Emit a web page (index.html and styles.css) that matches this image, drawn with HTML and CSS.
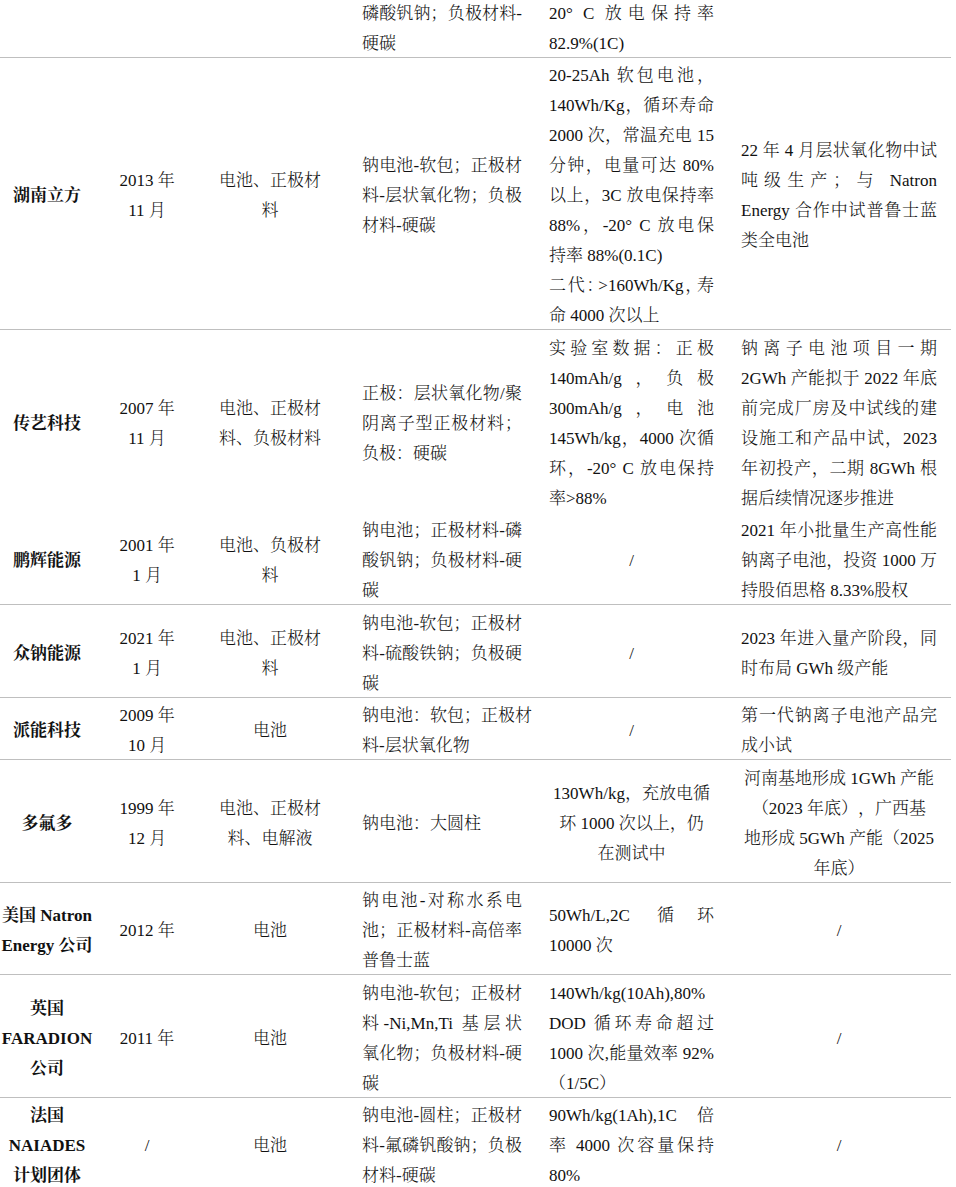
FILE: index.html
```html
<!DOCTYPE html>
<html lang="zh-CN">
<head>
<meta charset="utf-8">
<title>钠离子电池企业布局</title>
<link rel="stylesheet" href="styles.css">
</head>
<body>
<table class="tbl">
  <colgroup>
    <col class="w1"><col class="w2"><col class="w3"><col class="w4"><col class="w5"><col class="w6">
  </colgroup>
  <tbody>
    <tr>
      <td class="name"></td>
      <td class="c"></td>
      <td class="c"></td>
      <td class="mat"><div class="cv"><span class="ln j">磷酸钒钠；负极材料-</span><span class="ln">硬碳</span></div></td>
      <td class="perf"><div class="cv"><span class="ln j">20° C 放电保持率</span><span class="ln">82.9%(1C)</span></div></td>
      <td class="prog"></td>
    </tr>
    <tr>
      <td class="name"><div class="cv">湖南立方</div></td>
      <td class="c"><div class="cv">2013 年<br>11 月</div></td>
      <td class="c"><div class="cv">电池、正极材<br>料</div></td>
      <td class="mat"><div class="cv"><span class="ln j">钠电池-软包；正极材</span><span class="ln j">料-层状氧化物；负极</span><span class="ln">材料-硬碳</span></div></td>
      <td class="perf"><div class="cv"><span class="ln j">20-25Ah 软包电池，</span><span class="ln j">140Wh/Kg，循环寿命</span><span class="ln j">2000 次，常温充电 15</span><span class="ln j">分钟，电量可达 80%</span><span class="ln j">以上，3C 放电保持率</span><span class="ln j">88%，-20° C 放电保</span><span class="ln">持率 88%(0.1C)</span><span class="ln j">二代<span class="tight">：</span>&gt;160Wh/Kg<span class="tight">，</span>寿</span><span class="ln">命 4000 次以上</span></div></td>
      <td class="prog"><div class="cv"><span class="ln j">22 年 4 月层状氧化物中试</span><span class="ln j">吨级生产；与 Natron</span><span class="ln j">Energy 合作中试普鲁士蓝</span><span class="ln">类全电池</span></div></td>
    </tr>
    <tr class="nosep">
      <td class="name"><div class="cv">传艺科技</div></td>
      <td class="c"><div class="cv">2007 年<br>11 月</div></td>
      <td class="c"><div class="cv">电池、正极材<br>料、负极材料</div></td>
      <td class="mat"><div class="cv"><span class="ln j">正极：层状氧化物/聚</span><span class="ln j">阴离子型正极材料；</span><span class="ln">负极：硬碳</span></div></td>
      <td class="perf"><div class="cv"><span class="ln j">实验室数据：正极</span><span class="ln j">140mAh/g，负极</span><span class="ln j">300mAh/g，电池</span><span class="ln j">145Wh/kg，4000 次循</span><span class="ln j">环，-20° C 放电保持</span><span class="ln">率&gt;88%</span></div></td>
      <td class="prog"><div class="cv"><span class="ln j">钠离子电池项目一期</span><span class="ln j">2GWh 产能拟于 2022 年底</span><span class="ln j">前完成厂房及中试线的建</span><span class="ln j">设施工和产品中试，2023</span><span class="ln j">年初投产，二期 8GWh 根</span><span class="ln">据后续情况逐步推进</span></div></td>
    </tr>
    <tr>
      <td class="name"><div class="cv">鹏辉能源</div></td>
      <td class="c"><div class="cv">2001 年<br>1 月</div></td>
      <td class="c"><div class="cv">电池、负极材<br>料</div></td>
      <td class="mat"><div class="cv"><span class="ln j">钠电池；正极材料-磷</span><span class="ln j">酸钒钠；负极材料-硬</span><span class="ln">碳</span></div></td>
      <td class="perf mid"><div class="cv">/</div></td>
      <td class="prog"><div class="cv"><span class="ln j">2021 年小批量生产高性能</span><span class="ln j">钠离子电池，投资 1000 万</span><span class="ln">持股佰思格 8.33%股权</span></div></td>
    </tr>
    <tr>
      <td class="name"><div class="cv">众钠能源</div></td>
      <td class="c"><div class="cv">2021 年<br>1 月</div></td>
      <td class="c"><div class="cv">电池、正极材<br>料</div></td>
      <td class="mat"><div class="cv"><span class="ln j">钠电池-软包；正极材</span><span class="ln j">料-硫酸铁钠；负极硬</span><span class="ln">碳</span></div></td>
      <td class="perf mid"><div class="cv">/</div></td>
      <td class="prog"><div class="cv"><span class="ln j">2023 年进入量产阶段，同</span><span class="ln">时布局 GWh 级产能</span></div></td>
    </tr>
    <tr>
      <td class="name"><div class="cv">派能科技</div></td>
      <td class="c"><div class="cv">2009 年<br>10 月</div></td>
      <td class="c"><div class="cv">电池</div></td>
      <td class="mat"><div class="cv"><span class="ln j">钠电池：软包；正极材</span><span class="ln">料-层状氧化物</span></div></td>
      <td class="perf mid"><div class="cv">/</div></td>
      <td class="prog"><div class="cv"><span class="ln j">第一代钠离子电池产品完</span><span class="ln">成小试</span></div></td>
    </tr>
    <tr>
      <td class="name"><div class="cv">多氟多</div></td>
      <td class="c"><div class="cv">1999 年<br>12 月</div></td>
      <td class="c"><div class="cv">电池、正极材<br>料、电解液</div></td>
      <td class="mat"><div class="cv">钠电池：大圆柱</div></td>
      <td class="perf mid"><div class="cv">130Wh/kg，充放电循<br>环 1000 次以上，仍<br>在测试中</div></td>
      <td class="prog mid"><div class="cv">河南基地形成 1GWh 产能<br>（2023 年底），广西基<br>地形成 5GWh 产能（2025<br>年底）</div></td>
    </tr>
    <tr>
      <td class="name"><div class="cv">美国 Natron<br>Energy 公司</div></td>
      <td class="c"><div class="cv">2012 年</div></td>
      <td class="c"><div class="cv">电池</div></td>
      <td class="mat"><div class="cv"><span class="ln j">钠电池-对称水系电</span><span class="ln j">池；正极材料-高倍率</span><span class="ln">普鲁士蓝</span></div></td>
      <td class="perf"><div class="cv"><span class="ln j">50Wh/L,2C 循环</span><span class="ln">10000 次</span></div></td>
      <td class="prog mid"><div class="cv">/</div></td>
    </tr>
    <tr>
      <td class="name"><div class="cv">英国<br>FARADION<br>公司</div></td>
      <td class="c"><div class="cv">2011 年</div></td>
      <td class="c"><div class="cv">电池</div></td>
      <td class="mat"><div class="cv"><span class="ln j">钠电池-软包；正极材</span><span class="ln j">料-Ni,Mn,Ti 基层状</span><span class="ln j">氧化物；负极材料-硬</span><span class="ln">碳</span></div></td>
      <td class="perf"><div class="cv"><span class="ln j">140Wh/kg(10Ah),80%</span><span class="ln j">DOD 循环寿命超过</span><span class="ln j">1000 次,能量效率 92%</span><span class="ln">（1/5C）</span></div></td>
      <td class="prog mid"><div class="cv">/</div></td>
    </tr>
    <tr>
      <td class="name"><div class="cv">法国<br>NAIADES<br>计划团体</div></td>
      <td class="c"><div class="cv">/</div></td>
      <td class="c"><div class="cv">电池</div></td>
      <td class="mat"><div class="cv"><span class="ln j">钠电池-圆柱；正极材</span><span class="ln j">料-氟磷钒酸钠；负极</span><span class="ln">材料-硬碳</span></div></td>
      <td class="perf"><div class="cv"><span class="ln j">90Wh/kg(1Ah),1C 倍</span><span class="ln j">率 4000 次容量保持</span><span class="ln">80%</span></div></td>
      <td class="prog mid"><div class="cv">/</div></td>
    </tr>
  </tbody>
</table>
</body>
</html>
```

FILE: styles.css
```css
html, body {
  margin: 0;
  background: #ffffff;
}

body {
  color: #111111;
  font-family: "Liberation Serif", "Noto Serif CJK SC", "Noto Sans CJK SC", serif;
  font-size: 17px;
  line-height: 30px;
  font-weight: 350;
}

.tbl {
  width: 951px;
  table-layout: fixed;
  border-collapse: separate;
  border-spacing: 0;
  margin-top: -5px;
  text-spacing-trim: space-all;
  text-autospace: no-autospace;
}

.w1 { width: 94px; }
.w2 { width: 106px; }
.w3 { width: 140px; }
.w4 { width: 195px; }
.w5 { width: 193px; }
.w6 { width: 223px; }

.tbl td {
  padding: 1.5px 0 0;
  border-bottom: 1px solid #bfbfbf;
  vertical-align: middle;
  text-align: left;
}

.tbl .nosep td {
  border-bottom-color: transparent;
}

/* nudge the text 2px lower inside its cell without changing the row height */
.cv {
  margin-top: 2px;
  margin-bottom: -2px;
}

.tbl .name {
  text-align: center;
  font-weight: 700;
  white-space: nowrap;
}

.tbl .c {
  text-align: center;
  white-space: nowrap;
}

.tbl .mat {
  padding-left: 22px;
  padding-right: 13px;
}

.tbl .perf {
  padding-left: 14px;
  padding-right: 14px;
}

.tbl .prog {
  padding-left: 13px;
  padding-right: 14px;
}

.tbl .mid {
  text-align: center;
}

.ln {
  display: block;
  white-space: nowrap;
}

.j {
  text-align: justify;
  text-align-last: justify;
}

.tight {
  letter-spacing: -7px;
}
```
